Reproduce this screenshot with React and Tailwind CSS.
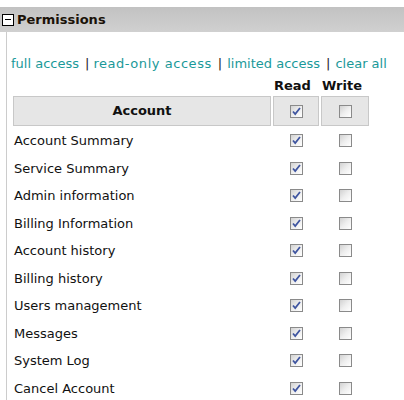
import React from 'react';

const rows = [
  'Account Summary',
  'Service Summary',
  'Admin information',
  'Billing Information',
  'Account history',
  'Billing history',
  'Users management',
  'Messages',
  'System Log',
  'Cancel Account',
];

const Box = ({ checked }) => (
  <div className="mx-auto w-[13px] h-[13px] border border-[#8a8a8a] bg-gradient-to-br from-[#d2d2d2] via-[#eeeeee] to-[#ffffff] flex items-center justify-center">
    {checked && (
      <svg width="9" height="9" viewBox="0 0 9 9">
        <path d="M1 4.5 L3.2 7 L8 1" fill="none" stroke="#3f55a0" strokeWidth="1.8" />
      </svg>
    )}
  </div>
);

export default function App() {
  return (
    <div className="w-[404px] h-[400px] overflow-hidden bg-white text-[13px] text-[#111] font-['DejaVu_Sans',Verdana,sans-serif]">
      {/* Section header */}
      <div className="mt-[7px] h-[25px] bg-gradient-to-b from-[#c2c2c2] to-[#d0d0d0] flex items-center pl-[2px]">
        <div className="w-[12px] h-[12px] border border-black bg-white flex items-center justify-center">
          <div className="w-[6px] h-[1px] bg-black" />
        </div>
        <span className="ml-[3px] font-bold text-[#1a1208]">Permissions</span>
      </div>

      <div className="ml-[6px] border-l border-[#cccccc] h-[368px] pl-[4px]">
        <div className="pt-[24px] h-[16px] box-content leading-[16px] text-[#1a9999] whitespace-nowrap">
          <span>full access</span>
          <span className="text-[#222] ml-[6px] mr-[4px]">|</span>
          <span className="tracking-[0.55px]">read-only access</span>
          <span className="text-[#222] ml-[6px] mr-[5px]">|</span>
          <span>limited access</span>
          <span className="text-[#222] ml-[6px] mr-[5px]">|</span>
          <span>clear all</span>
        </div>

        <table className="mt-[1px] border-separate border-spacing-[2px]">
          <thead>
            <tr className="h-[19px] font-bold">
              <td className="w-[258px]"></td>
              <td className="w-[46px] pl-[1px] align-bottom leading-[16px]">Read</td>
              <td className="w-[48px] pl-[1px] align-bottom leading-[16px]">Write</td>
            </tr>
            <tr className="h-[30px]">
              <td className="bg-[#e6e6e6] border border-[#c8c8c8] text-center font-bold">Account</td>
              <td className="bg-[#e6e6e6] border border-[#c8c8c8]"><Box checked /></td>
              <td className="bg-[#e6e6e6] border border-[#c8c8c8]"><Box /></td>
            </tr>
          </thead>
          <tbody>
            {rows.map((r) => (
              <tr key={r} className="h-[25.5px]">
                <td className="pl-[1px]">{r}</td>
                <td><Box checked /></td>
                <td><Box /></td>
              </tr>
            ))}
          </tbody>
        </table>
      </div>
    </div>
  );
}
